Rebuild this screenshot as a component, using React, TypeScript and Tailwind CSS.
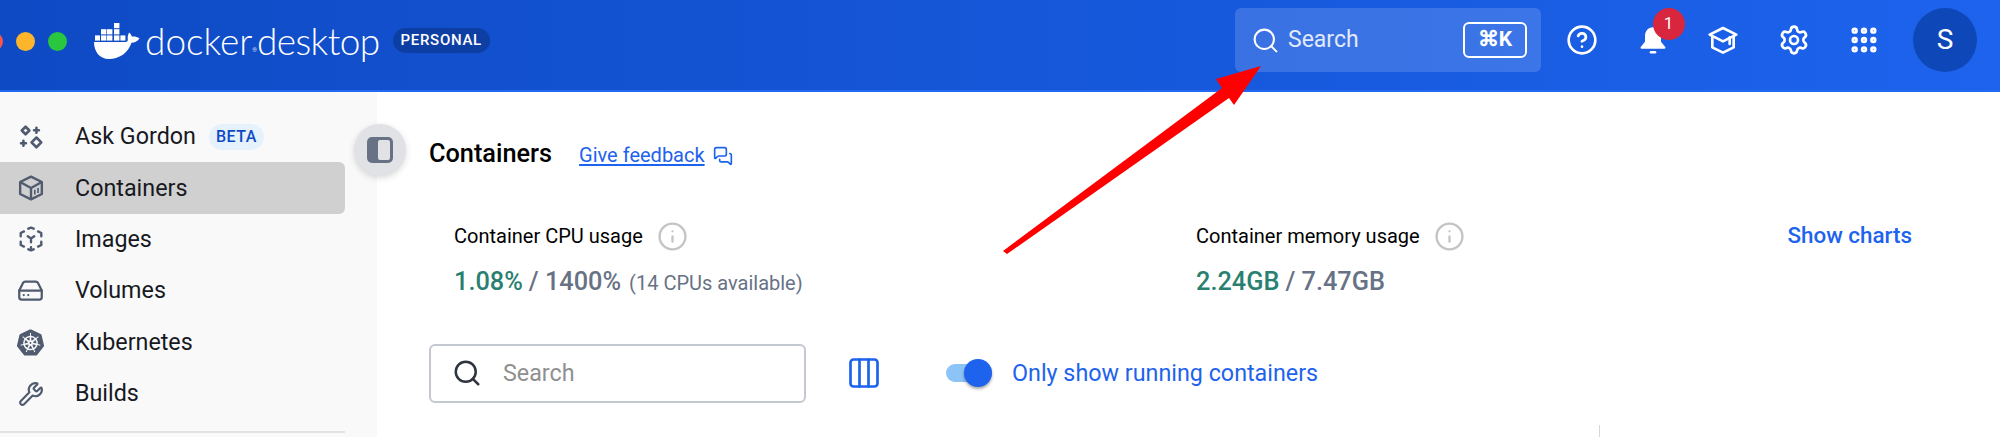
import React from 'react';
import { CircleHelp, Columns3, Grip, HardDrive, Info, MessagesSquare, Search, Settings, Wrench } from 'lucide-react';
import { SiKubernetes } from 'react-icons/si';

const DockerWhale = () => (
  <svg width="46" height="37" viewBox="0 0 46 37" fill="white">
    <rect x="20" y="1" width="5.4" height="5.2" />
    <rect x="7" y="7.2" width="5.4" height="5.2" />
    <rect x="13" y="7.2" width="5.4" height="5.2" />
    <rect x="20" y="7.2" width="5.4" height="5.2" />
    <rect x="1" y="13.4" width="5" height="5.2" />
    <rect x="7" y="13.4" width="5.4" height="5.2" />
    <rect x="13" y="13.4" width="5.4" height="5.2" />
    <rect x="20" y="13.4" width="5.4" height="5.2" />
    <rect x="26.4" y="13.4" width="5" height="5.2" />
    <path d="M0 20h32c1.500-.2 2-1.400 1.800-3.200-.3-2 .2-4.400 1.400-6.300 1.400 1.300 2.300 2.600 2.700 4.200 2-.4 4.800-.1 7.600 1.600-1.600 3.100-4.600 4.400-8 4.400C34.500 30 26 37 15 37 5 37 0 29 0 20z" />
  </svg>
);

const Sparkles = () => (
  <svg width="26" height="26" viewBox="0 0 24 24" fill="none" stroke="#505b70" strokeWidth="2.400" strokeLinejoin="round">
    <path d="M7 2.500 10.500 6 7 9.500 3.500 6z" />
    <path d="M17 12.500l4.500 4.500-4.500 4.500-4.500-4.500z" />
    <path d="M17 3.500v4.500M14.800 5.700h4.500M5 15.500V20M2.800 17.700h4.500" strokeLinecap="round" />
  </svg>
);

const ContainerBox = () => (
  <svg width="26" height="26" viewBox="0 0 24 24" fill="none" stroke="#505b70" strokeWidth="2.200" strokeLinejoin="round">
    <path d="M12 1.500 22 6.500v11L12 22.500 2 17.500v-11z" />
    <path d="M2 6.500 12 12l10-5.500M12 12v10.500" />
    <path d="M15.500 13.500v4.500M18.500 12v4.500" strokeWidth="1.500" />
  </svg>
);

const ImageIcon = () => (
  <svg width="26" height="26" viewBox="0 0 24 24" fill="none" stroke="#505b70" strokeWidth="2.200" strokeLinecap="round" strokeLinejoin="round">
    <path d="M9.500 2.500 12 1.500l2.500 1M18.500 5l3 1.500v3M21.500 14.500v3l-3 1.500M5.500 19l-3-1.500v-3M2.500 9.500v-3l3-1.500" />
    <path d="M9.500 21.500l2.500 1 2.500-1M12 19.500v3" />
    <path d="M9 9.500l3 2 3-2M12 11.500V15" />
  </svg>
);

const HatIcon = () => (
  <svg width="32" height="32" viewBox="0 0 24 24" fill="none" stroke="white" strokeWidth="2" strokeLinejoin="round" strokeLinecap="round">
    <path d="M12 3 22 8l-10 5L2 8z" />
    <path d="M4 10v7.500l8 4 8-4V10" />
    <path d="M17 10v5" />
  </svg>
);

const BellIcon = () => (
  <svg width="32" height="32" viewBox="0 0 24 24" fill="white">
    <path d="M12 2.500c-3.800 0-6 3-6 6.800v4L2.800 17.300c-.4.500-.1 1.200.6 1.200h17.200c.7 0 1-.7.6-1.200L18 13.300v-4c0-3.800-2.200-6.800-6-6.800z" />
    <rect x="9.500" y="20.300" width="5" height="1.900" rx=".95" />
  </svg>
);

const PanelIcon = () => (
  <svg width="28" height="28" viewBox="0 0 28 28">
    <rect x="1" y="1" width="26" height="26" rx="5" fill="#677285" />
    <rect x="12" y="4" width="12" height="20" rx="2" fill="#e1e2e6" />
  </svg>
);

const navItems = [
  { label: 'Ask Gordon', icon: <Sparkles />, beta: true },
  { label: 'Containers', icon: <ContainerBox />, active: true },
  { label: 'Images', icon: <ImageIcon /> },
  { label: 'Volumes', icon: <HardDrive size={27} color="#505b70" strokeWidth={2} /> },
  { label: 'Kubernetes', icon: <SiKubernetes size={27} color="#505b70" /> },
  { label: 'Builds', icon: <Wrench size={26} color="#505b70" strokeWidth={2} /> },
];

export default function App() {
  return (
    <div className="relative flex flex-col w-[2000px] h-[437px] overflow-hidden bg-white font-['Roboto',sans-serif] text-black">
      {/* Header */}
      <header className="flex items-center h-[92px] shrink-0 pb-[10px] border-b-2 border-[#2069f0] bg-gradient-to-r from-[#0e4ac4] to-[#1d63ed]">
        <div className="flex items-center gap-[13px] -ml-[16px] mt-[2px]">
          <span className="w-[19px] h-[19px] rounded-full bg-[#f9544d]" />
          <span className="w-[19px] h-[19px] rounded-full bg-[#fdb52b]" />
          <span className="w-[19px] h-[19px] rounded-full bg-[#29c73f]" />
        </div>
        <div className="ml-[27px] flex items-center">
          <DockerWhale />
          <span className="ml-[5px] font-['Lato',sans-serif] font-light text-[37px] leading-none text-white tracking-[0px]">docker</span>
          <span className="self-end mb-[6px] text-[6px] leading-none text-white/80">®</span>
          <span className="font-['Lato',sans-serif] font-light text-[37px] leading-none text-white -tracking-[0.600px]">desktop</span>
        </div>
        <span className="ml-[13px] h-[25px] px-[8px] flex items-center rounded-full bg-[#0d3ea3] text-white text-[15px] font-medium tracking-[0.7px]">PERSONAL</span>

        <div className="ml-auto mr-[23px] flex items-center">
          <div className="w-[306px] h-[64px] rounded-[6px] bg-white/15 flex items-center pl-[16px] pr-[14px]">
            <Search size={29} color="white" strokeWidth={1.700} />
            <span className="ml-[8px] text-[23px] text-white/85">Search</span>
            <span className="ml-auto w-[64px] h-[36px] rounded-[6px] border-2 border-white flex items-center justify-center text-white text-[21px] font-bold">⌘K</span>
          </div>
          <div className="ml-[25px] flex items-center gap-[38.500px]">
            <CircleHelp size={32} color="white" strokeWidth={2} />
            <div className="relative">
              <BellIcon />
              <span className="absolute -top-[16px] left-[16px] w-[32px] h-[32px] rounded-full bg-[#d7263d] text-white text-[17px] flex items-center justify-center">1</span>
            </div>
            <HatIcon />
            <Settings size={32} color="white" strokeWidth={2} />
            <Grip size={32} color="white" strokeWidth={2.800} />
          </div>
          <div className="ml-[33px] w-[64px] h-[64px] rounded-full bg-[#0e47b8] text-white text-[28px] flex items-center justify-center">S</div>
        </div>
      </header>

      <div className="flex flex-1 min-h-0">
        {/* Sidebar */}
        <aside className="relative w-[377px] shrink-0 bg-[#f9f9fa] pt-[19px]">
          <nav className="flex flex-col">
            {navItems.map(item => (
              <div key={item.label} className={`flex items-center h-[51.400px] w-[345px] rounded-r-[6px] pl-[17px] ${item.active ? 'bg-[#d0d0d0]' : ''}`}>
                <span className="w-[27px] flex justify-center">{item.icon}</span>
                <span className="ml-[31px] text-[23.300px] text-[#17191e]">{item.label}</span>
                {item.beta && (
                  <span className="ml-[13px] h-[26px] px-[7px] flex items-center rounded-full bg-[#e5f2fc] text-[#0e4ac4] text-[16px] font-medium tracking-[0.5px]">BETA</span>
                )}
              </div>
            ))}
          </nav>
          <div className="mt-[12px] w-[345px] h-[2px] bg-[#e1e2e6]" />
          <button className="absolute left-[354px] top-[32px] w-[52px] h-[52px] rounded-full bg-[#e1e2e6] shadow-[0_2px_6px_rgba(0,0,0,0.15)] flex items-center justify-center">
            <PanelIcon />
          </button>
        </aside>

        {/* Main */}
        <main className="flex-1 min-w-0 pl-[52px] pr-[88px] pt-[43px]">
          <div className="flex items-center h-[38px]">
            <h1 className="text-[25.300px] font-medium">Containers</h1>
            <a className="ml-[27px] mt-[2px] text-[20px] text-[#1d63ed] underline underline-offset-2">Give feedback</a>
            <MessagesSquare size={20} color="#1d63ed" strokeWidth={2} className="ml-[8px] mt-[4px]" />
          </div>

          <div className="mt-[48px] pl-[25px] flex">
            <div className="w-[742px]">
              <div className="flex items-center h-[30px]">
                <span className="text-[20px]">Container CPU usage</span>
                <Info size={31} color="#c4c4c4" strokeWidth={1.800} className="ml-[14px]" />
              </div>
              <div className="mt-[12px] flex items-baseline text-[25.300px] font-medium text-[#677285]">
                <span className="text-[#2a8070]">1.08%</span>
                <span className="ml-[6px]">/ 1400%</span>
                <span className="ml-[8px] text-[20px] font-normal">(14 CPUs available)</span>
              </div>
            </div>
            <div className="flex-1">
              <div className="flex items-center h-[30px]">
                <span className="text-[20px]">Container memory usage</span>
                <Info size={31} color="#c4c4c4" strokeWidth={1.800} className="ml-[14px]" />
                <span className="ml-auto text-[22.400px] font-medium text-[#1d63ed]">Show charts</span>
              </div>
              <div className="mt-[12px] flex items-baseline text-[25.300px] font-medium text-[#677285]">
                <span className="text-[#2a8070]">2.24GB</span>
                <span className="ml-[6px]">/ 7.47GB</span>
              </div>
            </div>
          </div>

          <div className="mt-[43px] flex items-center">
            <div className="w-[377px] h-[59px] rounded-[6px] border-2 border-[#c4c8d1] flex items-center pl-[21px]">
              <Search size={30} color="#2f343f" strokeWidth={2} />
              <span className="ml-[21px] text-[23.300px] text-[#8f8f8f]">Search</span>
            </div>
            <Columns3 size={36} color="#1d63ed" strokeWidth={1.800} className="ml-[40px]" />
            <div className="relative ml-[64px] w-[46px] h-[18px] rounded-full bg-[#8cc4f8]">
              <span className="absolute right-0 -top-[5px] w-[28px] h-[28px] rounded-full bg-[#1d63ed] shadow-[0_2px_3px_rgba(0,0,0,0.35)]" />
            </div>
            <span className="ml-[20px] text-[23.300px] text-[#1d63ed]">Only show running containers</span>
          </div>
          <div className="mt-[22px] ml-[1170px] w-[1px] h-[14px] bg-[#d5d7dc]" />
        </main>
      </div>

      {/* Annotation arrow */}
      <svg className="absolute left-0 top-0 pointer-events-none" width="2000" height="437">
        <path d="M1003 251 L1222 88 L1216 79 L1261 66 L1234 105 L1229 98 L1007 254 Z" fill="#ff0000" />
      </svg>
    </div>
  );
}
